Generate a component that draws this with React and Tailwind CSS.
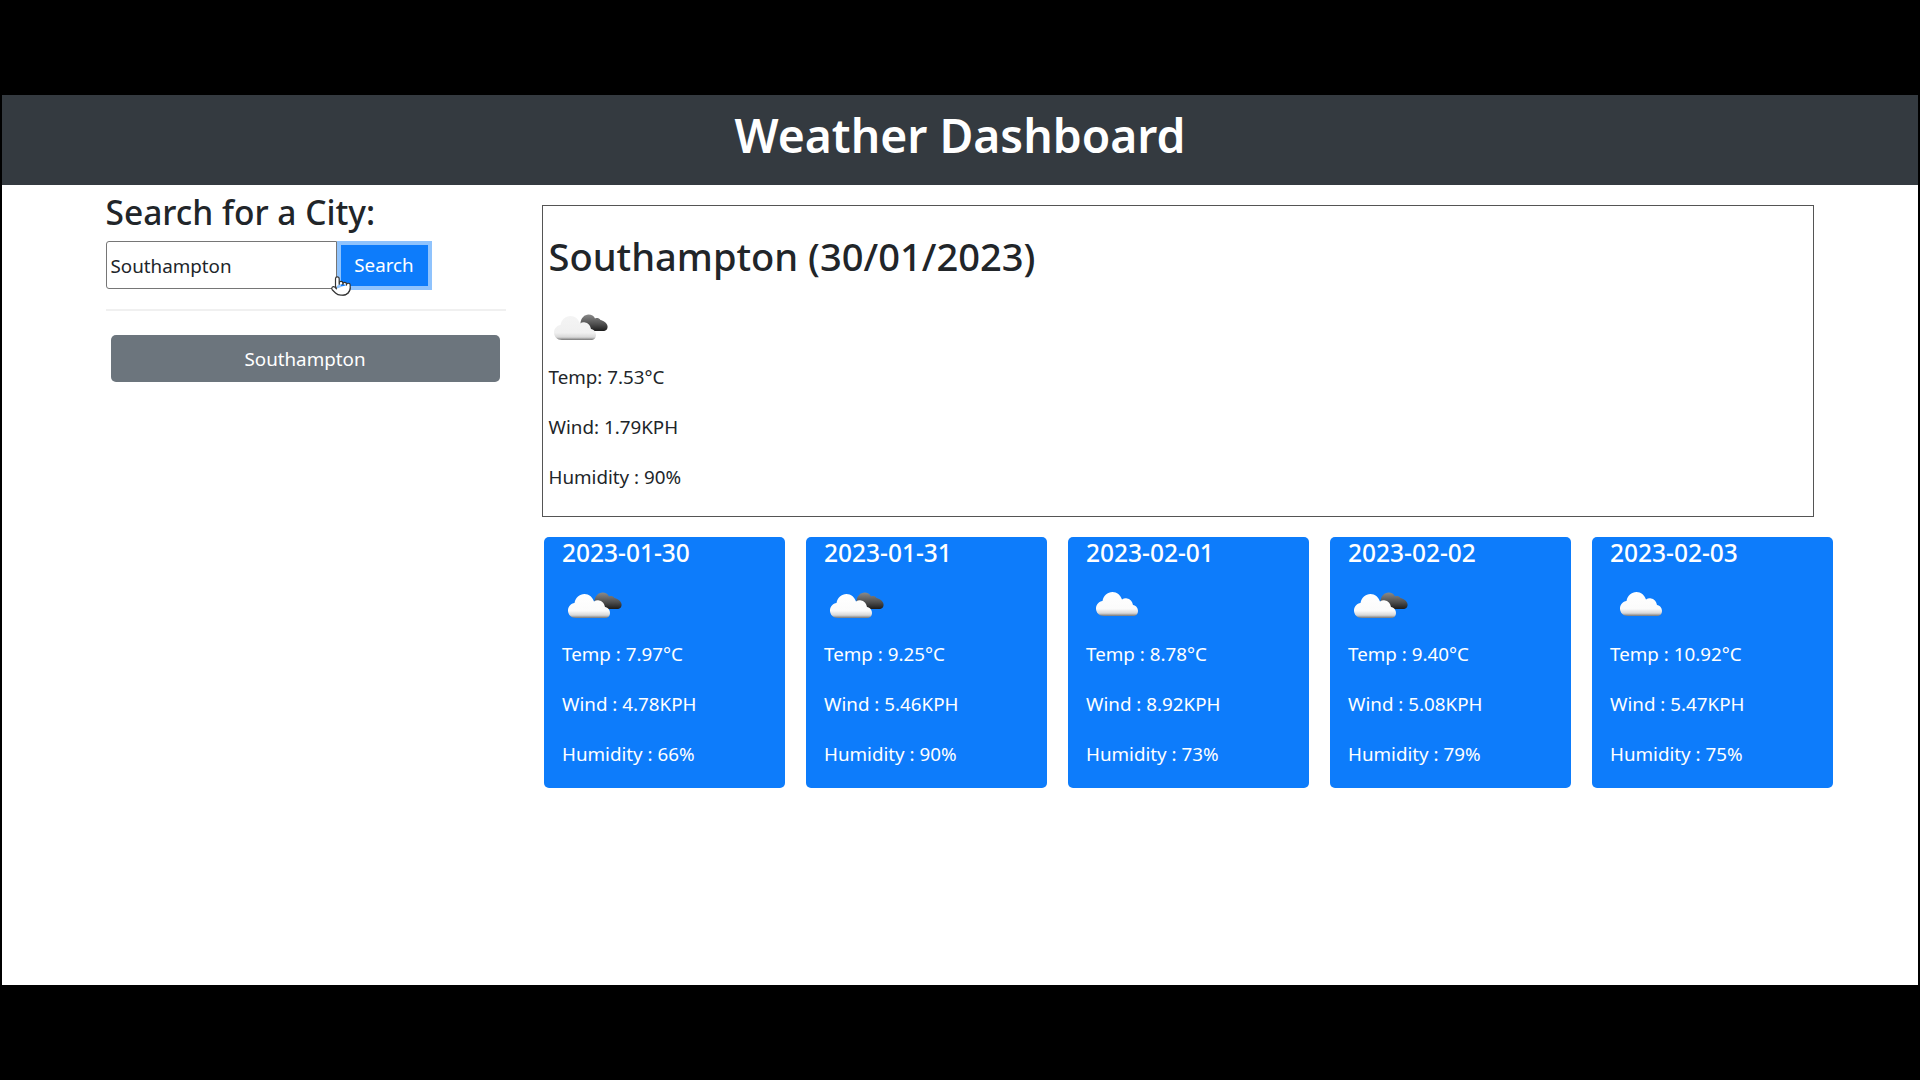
import { Pointer } from 'lucide-react';

const days = [
    { date: '2023-01-30', dark: true, temp: '7.97', wind: '4.78', humidity: '66' },
    { date: '2023-01-31', dark: true, temp: '9.25', wind: '5.46', humidity: '90' },
    { date: '2023-02-01', dark: false, temp: '8.78', wind: '8.92', humidity: '73' },
    { date: '2023-02-02', dark: true, temp: '9.40', wind: '5.08', humidity: '79' },
    { date: '2023-02-03', dark: false, temp: '10.92', wind: '5.47', humidity: '75' },
];

const cloudPath = 'M10 33 C5 33 2 29.500 2 25.500 C2 21.500 5 18.500 8.500 18 C9.500 12.500 13.500 9 18.500 9 C23 9 26.500 12 28 16.500 C29.500 15.500 31.500 15 33 15.500 C36.500 16 38.500 19 39 22 C42 22.500 44 25 44 28 C44 31 42 33 39 33 Z';
const darkCloudPath = 'M33 24 C30 23 28 20 28.500 16 C29 11 32.500 7.500 36.500 7.500 C39.500 7.500 42 9 43 11.500 C45 10.500 47 11 48.500 13 C51 13.500 55 15.500 55.500 19 C56 22 54 24 51 24 Z';

function CloudIcon({ id, dark, onWhite }) {
    return (
        <svg className="block h-[40px] w-[62px] blur-[0.5px]" viewBox="0 0 62 40">
            <defs>
                <linearGradient id={`${id}-light`} x1="0" y1="0" x2="0" y2="1">
                    <stop offset="0" stopColor={onWhite ? '#f4f4f4' : '#ffffff'} />
                    <stop offset="0.7" stopColor={onWhite ? '#f0f0f0' : '#fbfbfb'} />
                    <stop offset="0.88" stopColor="#d8d8d8" />
                    <stop offset="1" stopColor="#777777" />
                </linearGradient>
                <linearGradient id={`${id}-dark`} x1="0" y1="0" x2="0" y2="1">
                    <stop offset="0" stopColor="#8a8a8a" />
                    <stop offset="0.6" stopColor="#4d4d4d" />
                    <stop offset="1" stopColor="#1c1c1c" />
                </linearGradient>
            </defs>
            {dark && <path d={darkCloudPath} fill={`url(#${id}-dark)`} />}
            <path d={cloudPath} fill={`url(#${id}-light)`} transform={dark ? undefined : 'translate(4 -2)'} />
        </svg>
    );
}

function StatLine({ children }) {
    return <p className="mb-[21px] leading-[29px]">{children}</p>;
}

function ForecastCard({ day, index }) {
    return (
        <div className="h-[251px] w-[241px] shrink-0 rounded-[5px] bg-[#0d7cfb] pl-[18px] text-[18.800px] text-white">
            <h5 className="text-[24.500px] font-medium leading-[32px]">{day.date}</h5>
            <div className="mt-[16px] ml-[4px] mb-[15px]">
                <CloudIcon id={`card-${index}`} dark={day.dark} />
            </div>
            <StatLine>Temp : {day.temp}°C</StatLine>
            <StatLine>Wind : {day.wind}KPH</StatLine>
            <StatLine>Humidity : {day.humidity}%</StatLine>
        </div>
    );
}

export default function App() {
    return (
        <div className="h-[1080px] bg-black pt-[95px] font-['Noto_Sans','Open_Sans',sans-serif] text-[#212529]">
            <div className="mx-[2px] h-[890px] bg-white">
                {/* Header */}
                <header className="flex h-[90px] items-center justify-center bg-[#343a40] pb-[7px]">
                    <h1 className="text-[46.300px] font-semibold leading-none text-white">Weather Dashboard</h1>
                </header>

                <div className="flex pl-[103.500px]">
                    {/* Search column */}
                    <aside className="w-[400px] shrink-0">
                        <h2 className="mt-[7px] text-[33.500px] font-medium leading-[40px]">Search for a City:</h2>
                        <div className="relative mt-[9px] flex h-[48px]">
                            <input
                                readOnly
                                value="Southampton"
                                className="h-[48px] w-[231px] rounded-l-[3px] border border-[#767676] bg-white pl-[4px] pt-[1px] text-[18.800px] text-[#212529] outline-none"
                            />
                            <button className="h-[49px] w-[95px] border-[4px] border-[#8fc3fd] bg-[#0d7cfb] text-[18.800px] text-white">Search</button>
                            <Pointer className="absolute left-[224px] top-[33px] h-[24px] w-[22px] fill-white text-[#333]" strokeWidth={1.3} />
                        </div>
                        <hr className="mt-[20px] border-t-2 border-[#f0f0f0]" />
                        <button className="mt-[24px] ml-[5px] h-[47px] w-[389px] rounded-[5px] bg-[#6c757d] pt-[1px] text-[18.800px] text-white">Southampton</button>
                    </aside>

                    {/* Results */}
                    <main className="ml-[36.500px]">
                        <section className="mt-[20px] h-[312px] w-[1272px] border border-[#555] pl-[5.500px] text-[18.800px]">
                            <h2 className="mt-[27px] text-[38.100px] font-medium leading-[46px]">Southampton (30/01/2023)</h2>
                            <div className="mt-[28px] mb-[16px] ml-[3px]">
                                <CloudIcon id="today" dark onWhite />
                            </div>
                            <StatLine>Temp: 7.53°C</StatLine>
                            <StatLine>Wind: 1.79KPH</StatLine>
                            <StatLine>Humidity : 90%</StatLine>
                        </section>
                        <div className="mt-[20px] ml-[2px] flex gap-[21px]">
                            {days.map((day, index) => (
                                <ForecastCard key={day.date} day={day} index={index} />
                            ))}
                        </div>
                    </main>
                </div>
            </div>
        </div>
    );
}
